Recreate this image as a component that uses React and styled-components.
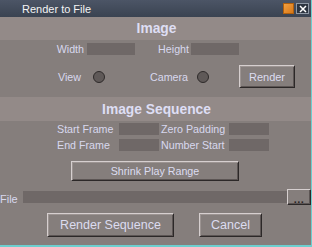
import React from "react";
import styled, { createGlobalStyle } from "styled-components";

const Global = createGlobalStyle`
  html, body { margin: 0; padding: 0; background: #857e7c; }
  body { font-family: "Liberation Sans", Arial, sans-serif; }
  * { box-sizing: border-box; }
`;

const Window = styled.div`
  width: 312px;
  height: 247px;
  background: #857e7c;
  border-right: 1px solid #6ccfcf;
  border-bottom: 2px solid #6ccfcf;
  display: flex;
  flex-direction: column;
  color: #d8d8ee;
  font-size: 10.7px;
  overflow: hidden;
`;

const TitleBar = styled.div`
  height: 17px;
  flex: none;
  display: flex;
  align-items: center;
  padding-left: 22px;
  padding-right: 2px;
  background: linear-gradient(#4c5566, #3a4351);
  color: #f4f4f4;
  font-size: 11px;
`;

const Title = styled.span`
  flex: 1;
`;

const MinBox = styled.div`
  width: 11px;
  height: 11px;
  background: linear-gradient(135deg, #f3a040, #d87818);
  border: 1px solid #b0600e;
  margin-right: 2px;
`;

const CloseBox = styled.div`
  width: 13px;
  height: 11px;
  background: #2c3440;
  border: 1px solid #8f98a5;
  display: flex;
  align-items: center;
  justify-content: center;
`;

const Band = styled.div`
  height: ${(p) => p.h}px;
  margin-top: ${(p) => p.mt || 0}px;
  flex: none;
  background: #938a88;
  display: flex;
  align-items: center;
  justify-content: center;
  font-weight: bold;
  font-size: 13.8px;
  color: #dedef4;
  padding-left: 2px;
`;

const Row = styled.div`
  display: flex;
  align-items: center;
  height: ${(p) => p.h}px;
  margin-top: ${(p) => p.mt || 0}px;
  flex: none;
`;

const RLabel = styled.span`
  width: ${(p) => p.w}px;
  margin-right: ${(p) => p.gap}px;
  text-align: right;
  white-space: nowrap;
`;

const Field = styled.div`
  width: ${(p) => p.w}px;
  height: ${(p) => p.h || 12}px;
  margin-top: ${(p) => p.mt || 0}px;
  background: #6f6867;
  flex: none;
`;

const Radio = styled.div`
  width: 12px;
  height: 12px;
  border-radius: 50%;
  background: #5f5958;
  border: 1px solid #2e2a2a;
  flex: none;
`;

const Button = styled.div`
  width: ${(p) => p.w}px;
  height: ${(p) => p.h}px;
  margin-left: ${(p) => p.ml || 0}px;
  flex: none;
  display: flex;
  align-items: center;
  justify-content: center;
  font-size: ${(p) => p.fs || 11}px;
  color: #dcdcf0;
  background: #857e7c;
  border: 1px solid;
  border-color: #d6cfcf #2c2828 #2c2828 #d6cfcf;
  box-shadow: inset 1px 1px 0 #9c9492, inset -1px -1px 0 #5c5554;
`;

const SeqGrid = styled.div`
  display: grid;
  grid-template-columns: 62px 40px 70px 40px;
  row-gap: 4px;
  margin-top: 2px;
  margin-left: 57px;
  align-items: center;
  & > span:nth-child(4n + 3) { padding-left: 2px; }
`;

const GLabel = styled.span`
  white-space: nowrap;
  line-height: 12px;
`;

const Center = styled.div`
  display: flex;
  margin-top: ${(p) => p.mt || 0}px;
  padding-left: ${(p) => p.pl || 0}px;
  flex: none;
`;

const FileRow = styled.div`
  display: flex;
  align-items: flex-start;
  margin-top: 8px;
  height: 16px;
  flex: none;
`;

const FileLabel = styled.span`
  width: 23px;
  padding-top: 4px;
  line-height: 12px;
  font-size: 11px;
`;

const BrowseButton = styled.div`
  width: 24px;
  height: 16px;
  flex: none;
  border: 1px solid;
  border-color: #d6cfcf #2c2828 #2c2828 #d6cfcf;
  box-shadow: inset -1px -1px 0 #5c5554;
  display: flex;
  align-items: flex-end;
  justify-content: center;
  font-weight: bold;
  color: #2a2626;
  font-size: 11px;
  line-height: 10px;
  letter-spacing: 0.5px;
`;

export default function App() {
  return (
    <>
      <Global />
      <Window>
        <TitleBar>
          <Title>Render to File</Title>
          <MinBox />
          <CloseBox>
            <svg width="8" height="8" viewBox="0 0 8 8">
              <path d="M1 1 L7 7 M7 1 L1 7" stroke="#fff" strokeWidth="1.5" />
            </svg>
          </CloseBox>
        </TitleBar>
        <Band h={23}>Image</Band>
        <Row h={12} mt={3}>
          <RLabel w={84} gap={3}>Width</RLabel>
          <Field w={48} />
          <RLabel w={54} gap={2}>Height</RLabel>
          <Field w={48} />
        </Row>
        <Row h={23} mt={10}>
          <RLabel w={81} gap={12}>View</RLabel>
          <Radio />
          <RLabel w={83} gap={9}>Camera</RLabel>
          <Radio />
          <Button w={56} h={23} ml={30}>Render</Button>
        </Row>
        <Band h={24} mt={9}>Image Sequence</Band>
        <SeqGrid>
          <GLabel>Start Frame</GLabel>
          <Field w={40} />
          <GLabel>Zero Padding</GLabel>
          <Field w={40} />
          <GLabel>End Frame</GLabel>
          <Field w={40} />
          <GLabel>Number Start</GLabel>
          <Field w={40} />
        </SeqGrid>
        <Center mt={10} pl={71}>
          <Button w={168} h={20} fs={10.7}>Shrink Play Range</Button>
        </Center>
        <FileRow>
          <FileLabel>File</FileLabel>
          <Field w={264} h={12} mt={2} />
          <BrowseButton>...</BrowseButton>
        </FileRow>
        <Center mt={8} pl={47}>
          <Button w={127} h={24} fs={12.5}>Render Sequence</Button>
          <Button w={63} h={24} fs={12.5} ml={25}>Cancel</Button>
        </Center>
      </Window>
    </>
  );
}
